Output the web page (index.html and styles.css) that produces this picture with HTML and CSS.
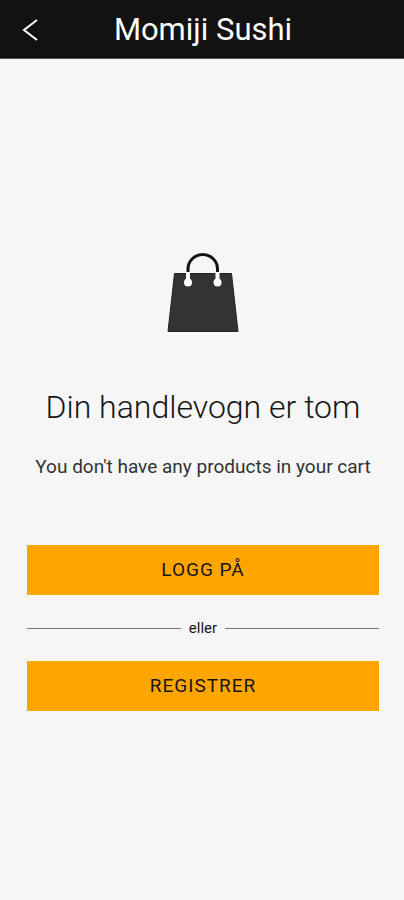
FILE: index.html
```html
<!DOCTYPE html>
<html lang="no">
<head>
<meta charset="utf-8">
<meta name="viewport" content="width=device-width, initial-scale=1">
<title>Momiji Sushi</title>
<link rel="stylesheet" href="styles.css">
</head>
<body>
<header class="bar">
  <button class="back" type="button" aria-label="Tilbake">
    <svg width="16" height="24" viewBox="0 0 16 24" fill="none" stroke="currentColor" stroke-width="2"><path d="M15 2 2 12l13 10"/></svg>
  </button>
  <h1 class="title">Momiji Sushi</h1>
</header>
<main class="cart">
  <svg class="bag" width="72" height="80" viewBox="0 0 72 80" aria-hidden="true">
    <path class="bag-body" d="M7.500 20.500h57l6.500 58H1z"/>
    <path class="bag-handle" d="M21 20v-4a14.750 14.500 0 0 1 29.500 0v4"/>
    <path class="bag-slot" d="M21 19v10M50.500 19v10"/>
    <circle class="bag-ring" cx="21" cy="29.500" r="4"/>
    <circle class="bag-ring" cx="50.500" cy="29.500" r="4"/>
  </svg>
  <h2 class="heading">Din handlevogn er tom</h2>
  <p class="message">You don't have any products in your cart</p>
  <div class="actions">
    <button class="action" type="button">LOGG PÅ</button>
    <div class="divider">eller</div>
    <button class="action" type="button">REGISTRER</button>
  </div>
</main>
</body>
</html>
```

FILE: styles.css
```css
* { box-sizing: border-box; }

body {
  margin: 0;
  min-height: 100vh;
  background: #f6f6f6;
  color: #161616;
  font-family: Roboto, sans-serif;
}

.bar {
  display: grid;
  grid-template-columns: 60px 1fr 58px;
  align-items: center;
  height: 59px;
  padding-top: 1px;
  border-bottom: 1px solid #555;
  background: #121212;
  color: #fff;
}

.back {
  display: flex;
  justify-content: center;
  padding: 0;
  border: 0;
  background: none;
  color: inherit;
}

.title {
  margin: 0;
  font-size: 31px;
  font-weight: 400;
  line-height: 40px;
  text-align: center;
  white-space: nowrap;
}

.cart {
  display: flex;
  flex-direction: column;
  align-items: center;
  padding: 194px 25px 40px 27px;
}

.bag { display: block; }
.bag-body { fill: #333; stroke: #222; stroke-width: 1; }
.bag-handle { fill: none; stroke: #111; stroke-width: 3; }
.bag-slot { fill: none; stroke: #fff; stroke-width: 4; }
.bag-ring { fill: #fff; }

.heading {
  margin: 54px 0 0;
  font-size: 32px;
  font-weight: 350;
  line-height: 40px;
  white-space: nowrap;
}

.message {
  margin: 28px 0 0;
  color: #333;
  font-size: 19px;
  line-height: 24px;
  font-weight: 400;
  white-space: nowrap;
}

.actions {
  width: 100%;
  margin-top: 66px;
}

.action {
  display: block;
  width: 100%;
  height: 50px;
  border: 0;
  background: #ffa500;
  color: #161616;
  font: 400 19px/24px Roboto, sans-serif;
  letter-spacing: 1px;
}

.divider {
  display: flex;
  align-items: center;
  gap: 8px;
  height: 66px;
  font-size: 15px;
}

.divider::before,
.divider::after {
  content: "";
  flex: 1;
  height: 1px;
  background: #777;
}
```
